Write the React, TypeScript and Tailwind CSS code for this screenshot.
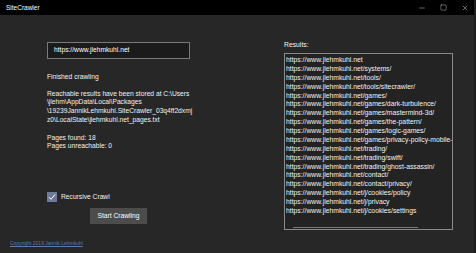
import { Minus, Square, X } from "lucide-react";

const results = [
  "https://www.jlehmkuhl.net",
  "https://www.jlehmkuhl.net/systems/",
  "https://www.jlehmkuhl.net/tools/",
  "https://www.jlehmkuhl.net/tools/sitecrawler/",
  "https://www.jlehmkuhl.net/games/",
  "https://www.jlehmkuhl.net/games/dark-turbulence/",
  "https://www.jlehmkuhl.net/games/mastermind-3d/",
  "https://www.jlehmkuhl.net/games/the-pattern/",
  "https://www.jlehmkuhl.net/games/logic-games/",
  "https://www.jlehmkuhl.net/games/privacy-policy-mobile-",
  "https://www.jlehmkuhl.net/trading/",
  "https://www.jlehmkuhl.net/trading/swift/",
  "https://www.jlehmkuhl.net/trading/ghost-assassin/",
  "https://www.jlehmkuhl.net/contact/",
  "https://www.jlehmkuhl.net/contact/privacy/",
  "https://www.jlehmkuhl.net/j/cookies/policy",
  "https://www.jlehmkuhl.net/j/privacy",
  "https://www.jlehmkuhl.net/j/cookies/settings",
];

export default function App() {
  return (
    <div
      className="w-[476px] h-[253px] flex flex-col bg-[#272727] text-[#f2f2f2] overflow-hidden border-r-2 border-[#1c1c1c]"
      style={{ fontFamily: '"Liberation Sans", Arial, sans-serif' }}
    >
      {/* title bar */}
      <div className="h-[15px] bg-black flex items-center justify-between pl-[6px] pr-[5px]">
        <span className="text-[6.5px] text-white">SiteCrawler</span>
        <div className="flex items-center gap-[14px] text-[#d0d0d0]">
          <Minus size={8} strokeWidth={1.5} />
          <Square size={7} strokeWidth={1.5} />
          <X size={8} strokeWidth={1.5} />
        </div>
      </div>

      <div className="flex flex-1">
        {/* left */}
        <div className="w-[237px] flex flex-col pl-[47px] pt-[27px] text-[6.7px] leading-[8.7px]">
          <div className="w-[143px] h-[17px] border border-[#7a7a7a] bg-[#1b1b1b] flex items-center pl-[6px] text-white">
            https://www.jlehmkuhl.net
          </div>

          <div className="mt-[14px]">Finished crawling</div>

          <div className="mt-[8px] whitespace-nowrap">
            <div>Reachable results have been stored at C:\Users</div>
            <div>\jlehm\AppData\Local\Packages</div>
            <div>\19239JannikLehmkuhl.SiteCrawler_03q4ff2dxmj</div>
            <div>z0\LocalState\jlehmkuhl.net_pages.txt</div>
          </div>

          <div className="mt-[9px]">
            <div>Pages found: 18</div>
            <div>Pages unreachable: 0</div>
          </div>

          <div className="mt-[41px] flex items-center gap-[4px]">
            <div className="w-[10px] h-[10px] bg-[#6f7b96] flex items-center justify-center">
              <svg width="8" height="8" viewBox="0 0 8 8">
                <path d="M1 4.2 L3 6.3 L7 1.5" fill="none" stroke="#fff" strokeWidth="1" />
              </svg>
            </div>
            <span>Recursive Crawl</span>
          </div>

          <div className="mt-[6px] ml-[43px] w-[57px] h-[16px] bg-[#4c4c4c] flex items-center justify-center text-white">
            Start Crawling
          </div>

          <div className="mt-[15px] -ml-[37px] text-[5px] text-[#5b7bb0] underline">
            Copyright 2019 Jannik Lehmkuhl
          </div>
        </div>

        {/* right */}
        <div className="flex flex-col pl-[47px] pt-[25px] text-[6.8px]">
          <div className="leading-[9px]">Results:</div>
          <div className="mt-[4px] w-[169px] h-[177px] border border-[#8a8a8a] bg-[#232323] overflow-hidden relative pl-[1px] pt-[2px]">
            {results.map((r) => (
              <div key={r} className="whitespace-nowrap leading-[8.87px]">
                {r}
              </div>
            ))}
            <div className="absolute left-[8px] bottom-[1px] w-[125px] h-[1px] bg-[#777]" />
          </div>
        </div>
      </div>
    </div>
  );
}
